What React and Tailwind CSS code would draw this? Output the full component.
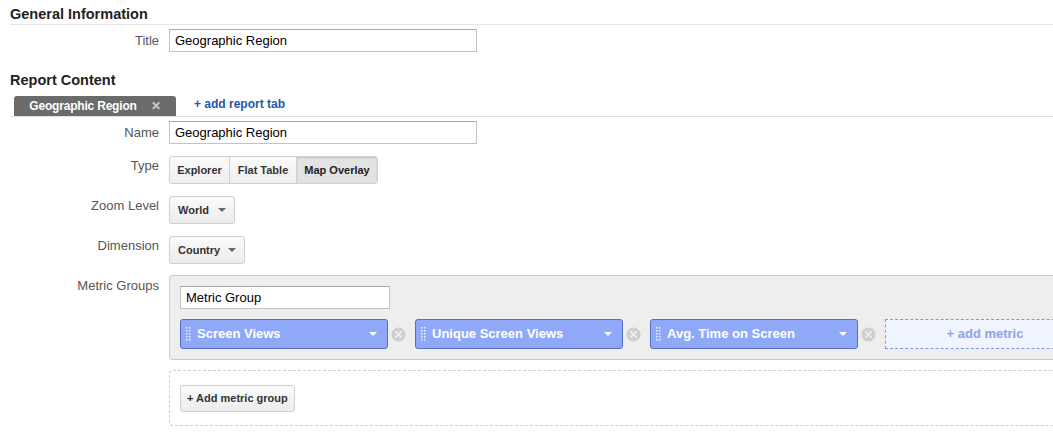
import React from 'react';

const Caret = ({ className = 'border-t-[#666]' }) => (
  <span className={`inline-block w-0 h-0 border-l-[4px] border-r-[4px] border-t-[4px] border-l-transparent border-r-transparent ${className}`} />
);

const Remove = () => (
  <svg width="15" height="15" viewBox="0 0 16 16" className="shrink-0">
    <circle cx="8" cy="8" r="7.5" fill="#cfcfcf" />
    <path d="M5.2 5.2 L10.8 10.8 M10.8 5.2 L5.2 10.8" stroke="#eee" strokeWidth="1.8" strokeLinecap="round" />
  </svg>
);

const Grip = () => (
  <svg width="5" height="14" viewBox="0 0 5 14" className="shrink-0">
    {[1, 4, 7, 10, 13].map((y) => (
      <g key={y}>
        <rect x="0" y={y - 1} width="1.5" height="1.5" fill="#fff" opacity="0.85" />
        <rect x="3" y={y - 1} width="1.5" height="1.5" fill="#fff" opacity="0.85" />
      </g>
    ))}
  </svg>
);

const Row = ({ label, children, top = 'items-center', className = '' }) => (
  <div className={`flex ${top} ${className}`}>
    <div className="w-[159px] text-right text-[13px] text-[#555] shrink-0">{label}</div>
    <div className="ml-[10px] flex-1 min-w-0">{children}</div>
  </div>
);

const TextInput = ({ value, w = 'w-[308px]' }) => (
  <div className={`${w} h-[23px] border border-[#c3c3c3] border-t-[#a8a8a8] bg-white px-[5px] flex items-center text-[13px] text-black`}>
    {value}
  </div>
);

const Select = ({ value, w }) => (
  <div className={`${w} h-[28px] rounded-[3px] border border-[#d0d0d0] bg-gradient-to-b from-[#fafafa] to-[#ececec] flex items-center justify-between px-[8px] text-[11px] font-bold text-[#333]`}>
    <span>{value}</span>
    <Caret />
  </div>
);

const Chip = ({ label }) => (
  <div className="flex items-center gap-[3px] shrink-0">
    <div className="w-[208px] h-[30px] rounded-[3px] bg-[#8fa9f8] border border-[#5a6fc0] flex items-center pl-[5px] pr-[10px]">
      <Grip />
      <span className="ml-[6px] flex-1 text-[13px] font-bold text-white">{label}</span>
      <Caret className="border-t-white" />
    </div>
    <Remove />
  </div>
);

export default function App() {
  const metrics = ['Screen Views', 'Unique Screen Views', 'Avg. Time on Screen'];
  return (
    <div className="w-[1053px] h-[439px] overflow-hidden bg-white font-['Liberation_Sans',Arial,sans-serif] pl-[10px]">
      <h2 className="pt-[6px] text-[14.5px] font-bold text-[#222] leading-[17px]">General Information</h2>
      <div className="mt-[1px] border-t border-[#e5e5e5]" />
      <Row label="Title" className="mt-[4px] -ml-[10px]">
        <TextInput value="Geographic Region" />
      </Row>

      <h2 className="mt-[20px] text-[14.5px] font-bold text-[#222] leading-[17px]">Report Content</h2>
      <div className="mt-[6px] flex items-end">
        <div className="ml-[4px] w-[162px] h-[20px] rounded-t-[3px] bg-[#6b6b6b] flex items-center justify-center gap-[14px] text-[12px] font-bold text-white">
          <span className="tracking-[-0.2px]">Geographic Region</span>
          <span className="text-[#ccc] text-[12px]">✕</span>
        </div>
        <span className="ml-[18px] mb-[3px] text-[12px] font-bold text-[#1a5aa8]">+ add report tab</span>
      </div>
      <div className="border-t border-[#e0e0e0]" />

      <div className="-ml-[10px]">
        <Row label="Name" className="mt-[4px]">
          <TextInput value="Geographic Region" />
        </Row>

        <Row label="Type" top="items-start" className="mt-[12px]">
          <div className="flex h-[28px] w-[209px] rounded-[3px] border border-[#d0d0d0] text-[11px] font-bold text-[#333] overflow-hidden">
            <div className="w-[60px] flex items-center justify-center bg-gradient-to-b from-[#fafafa] to-[#efefef] border-r border-[#d0d0d0]">Explorer</div>
            <div className="w-[67px] flex items-center justify-center bg-gradient-to-b from-[#fafafa] to-[#efefef] border-r border-[#d0d0d0]">Flat Table</div>
            <div className="flex-1 flex items-center justify-center bg-[#e3e3e3] shadow-[inset_0_1px_2px_rgba(0,0,0,0.15)] text-[#222]">Map Overlay</div>
          </div>
        </Row>

        <Row label="Zoom Level" top="items-start" className="mt-[12px]">
          <Select value="World" w="w-[66px]" />
        </Row>

        <Row label="Dimension" top="items-start" className="mt-[12px]">
          <Select value="Country" w="w-[76px]" />
        </Row>

        <Row label="Metric Groups" top="items-start" className="mt-[12px]">
          <div className="-mt-[1px] h-[85px] rounded-l-[4px] border border-r-0 border-[#cccccc] bg-[#eeeeee] pl-[10px] pt-[10px]">
            <TextInput value="Metric Group" w="w-[210px]" />
            <div className="mt-[10px] flex items-center gap-[9px]">
              {metrics.map((m) => (
                <Chip key={m} label={m} />
              ))}
              <div className="w-[200px] h-[30px] shrink-0 border border-dashed border-[#7f97ea] bg-[#eff4fe] flex items-center justify-center text-[13px] font-bold text-[#8fa3ea]">
                + add metric
              </div>
            </div>
          </div>
          <div className="mt-[10px] h-[56px] rounded-l-[4px] border border-r-0 border-dashed border-[#cccccc] pl-[10px] pt-[14px]">
            <div className="inline-flex h-[27px] items-center rounded-[3px] border border-[#d0d0d0] bg-gradient-to-b from-[#fafafa] to-[#ececec] px-[6px] text-[11px] font-bold text-[#333]">
              + Add metric group
            </div>
          </div>
        </Row>
      </div>
    </div>
  );
}
